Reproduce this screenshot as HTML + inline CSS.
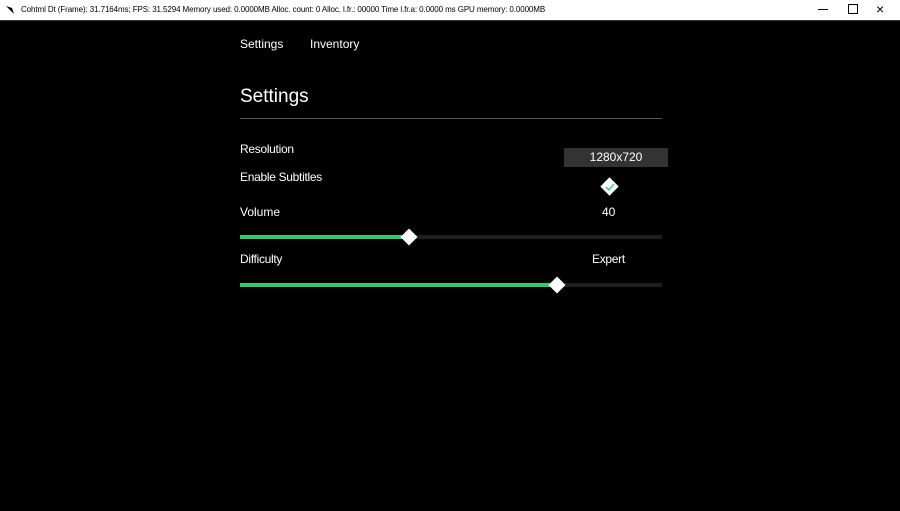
<!DOCTYPE html>
<html><head><style>
body{margin:0;width:900px;height:511px;background:#000;overflow:hidden;font-family:"Liberation Sans",sans-serif;position:relative}
.tb{position:absolute;left:0;top:0;width:900px;height:20px;background:#fff;border-bottom:1px solid #333;font-size:8px;color:#000;}
.t{position:absolute;color:#fff;white-space:nowrap}
.track{position:absolute;height:4px;background:#1e1e1e;left:240px;width:422px}
.fill{position:absolute;height:4px;background:#2ecc71;left:0;top:0}
.thumb{position:absolute;width:12px;height:12px;background:#fff;transform:rotate(45deg);top:-4px}
</style></head><body>
<div class="tb">
<svg style="position:absolute;left:5px;top:5px" width="10" height="10" viewBox="0 0 10 10"><path d="M1 1 L7 3 L9 9 L5 5 Z" fill="#000"/></svg>
<span style="position:absolute;left:21px;top:5px;letter-spacing:-0.1px">Cohtml Dt (Frame): 31.7164ms; FPS: 31.5294 Memory used: 0.0000MB Alloc. count: 0 Alloc. l.fr.: 00000 Time l.fr.a: 0.0000 ms GPU memory: 0.0000MB</span>
<span style="position:absolute;left:818px;top:9px;width:10px;height:1px;background:#000"></span>
<span style="position:absolute;left:848px;top:4px;width:8px;height:8px;border:1px solid #000"></span>
<span style="position:absolute;left:876px;top:1px;font-size:14px">×</span>
</div>
<div class="t" style="left:240px;top:37px;font-size:12px">Settings</div>
<div class="t" style="left:310px;top:37px;font-size:12px">Inventory</div>
<div class="t" style="left:240px;top:86px;font-size:19px">Settings</div>
<div style="position:absolute;left:240px;top:118px;width:422px;height:1px;background:#555"></div>
<div class="t" style="left:240px;top:142px;font-size:12px;letter-spacing:-0.3px">Resolution</div>
<div style="position:absolute;left:564px;top:148px;width:104px;height:19px;background:#333;color:#fff;font-size:12px;text-align:center;line-height:19px">1280x720</div>
<div class="t" style="left:240px;top:170px;font-size:12px;letter-spacing:-0.3px">Enable Subtitles</div>
<div style="position:absolute;left:603px;top:180px;width:13px;height:13px;background:#fff;transform:rotate(45deg)"></div>
<svg style="position:absolute;left:604px;top:181px" width="12" height="12" viewBox="0 0 12 12"><path d="M2 6 L5 9 L10 3" stroke="#2ecc71" stroke-width="1.3" fill="none"/></svg>
<div class="t" style="left:240px;top:205px;font-size:12px">Volume</div>
<div class="t" style="left:602px;top:205px;font-size:12px">40</div>
<div class="track" style="top:235px"><div class="fill" style="width:169px"></div><div class="thumb" style="left:163px"></div></div>
<div class="t" style="left:240px;top:252px;font-size:12px;letter-spacing:-0.3px">Difficulty</div>
<div class="t" style="left:592px;top:252px;font-size:12px;letter-spacing:-0.3px">Expert</div>
<div class="track" style="top:283px"><div class="fill" style="width:317px"></div><div class="thumb" style="left:311px"></div></div>
</body></html>
